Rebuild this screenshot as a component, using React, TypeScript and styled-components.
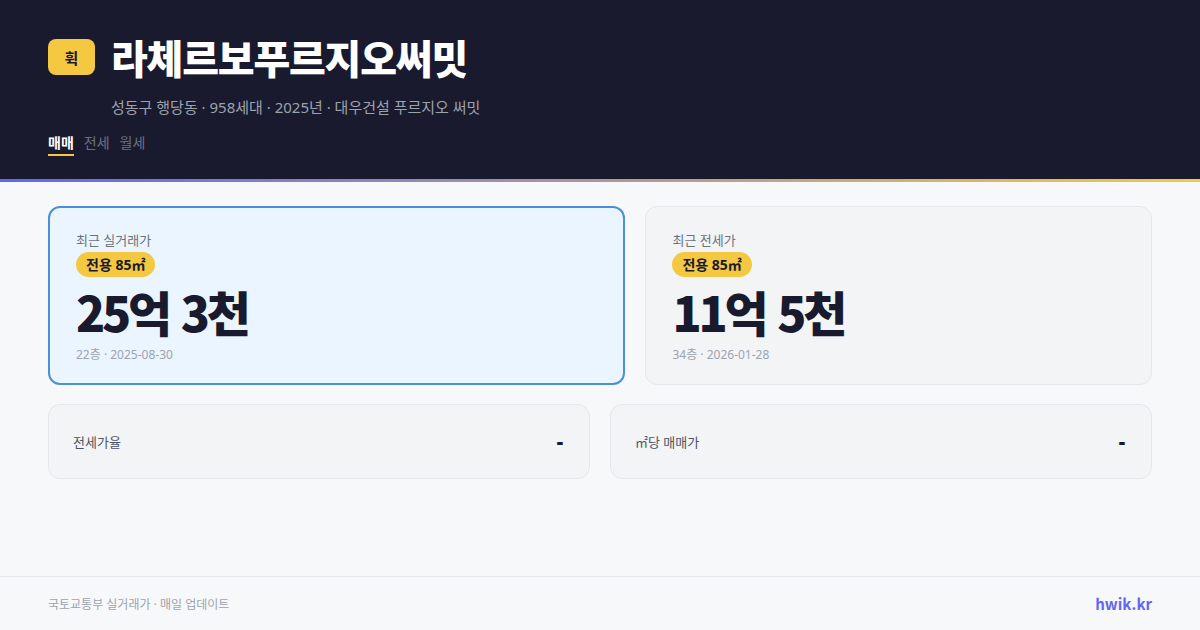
import React, { useState } from 'react';
import styled, { createGlobalStyle } from 'styled-components';

const GlobalStyle = createGlobalStyle`
  html, body {
    margin: 0;
    padding: 0;
    background: #f7f8fa;
    font-family: "Noto Sans", "Noto Sans CJK KR", sans-serif;
  }
  * { box-sizing: border-box; }
`;

const Page = styled.div`
  display: flex;
  flex-direction: column;
  min-height: 100vh;
  background: #f7f8fa;
`;

const Header = styled.header`
  background: #1a1a2e;
  height: 179px;
  padding: 32px 48px 0;
`;

const GradientBar = styled.div`
  height: 3px;
  background: linear-gradient(90deg, #6366f1 0%, #f5c842 100%);
`;

const TitleRow = styled.div`
  display: flex;
  align-items: center;
  gap: 16px;
  height: 50px;
`;

const Logo = styled.div`
  width: 47px;
  height: 36px;
  border-radius: 8px;
  background: #f5c842;
  color: #1a1a2e;
  font-family: "Noto Sans CJK KR", sans-serif;
  font-size: 15px;
  font-weight: 700;
  display: flex;
  align-items: center;
  justify-content: center;
`;

const Title = styled.h1`
  margin: 0;
  color: #ffffff;
  font-family: "Noto Sans CJK KR", sans-serif;
  font-size: 40px;
  font-weight: 900;
  letter-spacing: -1.2px;
  line-height: 50px;
`;

const Subtitle = styled.div`
  margin: 14px 0 0 63px;
  color: #9ca3af;
  font-size: 15px;
  line-height: 22px;
`;

const Tabs = styled.nav`
  display: flex;
  gap: 10px;
  margin-top: 15px;
`;

const Tab = styled.span<{ $active?: boolean }>`
  font-size: 14px;
  line-height: 20px;
  padding-bottom: 1px;
  font-weight: ${(p) => (p.$active ? 700 : 400)};
  color: ${(p) => (p.$active ? '#ffffff' : '#6b7280')};
  border-bottom: 2px solid ${(p) => (p.$active ? '#f5c842' : 'transparent')};
  cursor: pointer;
`;

const Main = styled.main`
  flex: 1;
  padding: 24px 48px;
  display: flex;
  flex-direction: column;
  gap: 19px;
`;

const TopRow = styled.div`
  display: grid;
  grid-template-columns: 1.14fr 1fr;
  gap: 20px;
`;

const PriceCard = styled.div<{ $highlight?: boolean }>`
  height: 179px;
  border-radius: 12px;
  background: ${(p) => (p.$highlight ? '#ebf5ff' : '#f3f4f6')};
  border: ${(p) => (p.$highlight ? '2px solid #4a90d9' : '1px solid #e5e7eb')};
  padding: ${(p) => (p.$highlight ? '23px 26px' : '24px 26px')};
  display: flex;
  flex-direction: column;
  align-items: flex-start;
`;

const CardLabel = styled.div`
  font-size: 13px;
  line-height: 18px;
  color: #6b7280;
`;

const AreaBadge = styled.span`
  margin-top: 3px;
  background: #f5c842;
  color: #1a1a2e;
  font-size: 14px;
  font-weight: 700;
  line-height: 19px;
  padding: 3px 10px;
  border-radius: 13px;
`;

const Price = styled.div`
  margin-top: 6px;
  font-family: "Noto Sans CJK KR", sans-serif;
  font-size: 48px;
  font-weight: 900;
  letter-spacing: -3.2px;
  word-spacing: 4px;
  line-height: 56px;
  color: #1a1a2e;
`;

const Meta = styled.div`
  margin-top: 7px;
  font-size: 12px;
  line-height: 17px;
  color: #9ca3af;
`;

const BottomRow = styled.div`
  display: grid;
  grid-template-columns: 1fr 1fr;
  gap: 20px;
`;

const StatCard = styled.div`
  height: 75px;
  border-radius: 12px;
  background: #f3f4f6;
  border: 1px solid #e5e7eb;
  padding: 0 26px 0 24px;
  display: flex;
  align-items: center;
  justify-content: space-between;
`;

const StatLabel = styled.span`
  font-size: 13px;
  color: #4b5563;
`;

const StatValue = styled.span`
  font-size: 20px;
  font-weight: 900;
  color: #1a1a2e;
`;

const Footer = styled.footer`
  height: 54px;
  border-top: 1px solid #e5e7eb;
  padding: 0 48px;
  display: flex;
  align-items: center;
  justify-content: space-between;
`;

const FooterNote = styled.span`
  font-size: 12px;
  color: #9ca3af;
`;

const Brand = styled.span`
  font-family: "Noto Sans CJK KR", sans-serif;
  font-size: 15px;
  font-weight: 700;
  color: #6366f1;
`;

const cards = [
  { label: '최근 실거래가', area: '전용 85㎡', price: '25억 3천', meta: '22층 · 2025-08-30', highlight: true },
  { label: '최근 전세가', area: '전용 85㎡', price: '11억 5천', meta: '34층 · 2026-01-28', highlight: false },
];

const stats = [
  { label: '전세가율', value: '-' },
  { label: '㎡당 매매가', value: '-' },
];

const App: React.FC = () => {
  const [tab, setTab] = useState('매매');

  return (
    <Page>
      <GlobalStyle />
      <Header>
        <TitleRow>
          <Logo>휙</Logo>
          <Title>라체르보푸르지오써밋</Title>
        </TitleRow>
        <Subtitle>성동구 행당동 · 958세대 · 2025년 · 대우건설 푸르지오 써밋</Subtitle>
        <Tabs>
          {['매매', '전세', '월세'].map((t) => (
            <Tab key={t} $active={tab === t} onClick={() => setTab(t)}>
              {t}
            </Tab>
          ))}
        </Tabs>
      </Header>
      <GradientBar />
      <Main>
        <TopRow>
          {cards.map((c) => (
            <PriceCard key={c.label} $highlight={c.highlight}>
              <CardLabel>{c.label}</CardLabel>
              <AreaBadge>{c.area}</AreaBadge>
              <Price>{c.price}</Price>
              <Meta>{c.meta}</Meta>
            </PriceCard>
          ))}
        </TopRow>
        <BottomRow>
          {stats.map((s) => (
            <StatCard key={s.label}>
              <StatLabel>{s.label}</StatLabel>
              <StatValue>{s.value}</StatValue>
            </StatCard>
          ))}
        </BottomRow>
      </Main>
      <Footer>
        <FooterNote>국토교통부 실거래가 · 매일 업데이트</FooterNote>
        <Brand>hwik.kr</Brand>
      </Footer>
    </Page>
  );
};

export default App;
